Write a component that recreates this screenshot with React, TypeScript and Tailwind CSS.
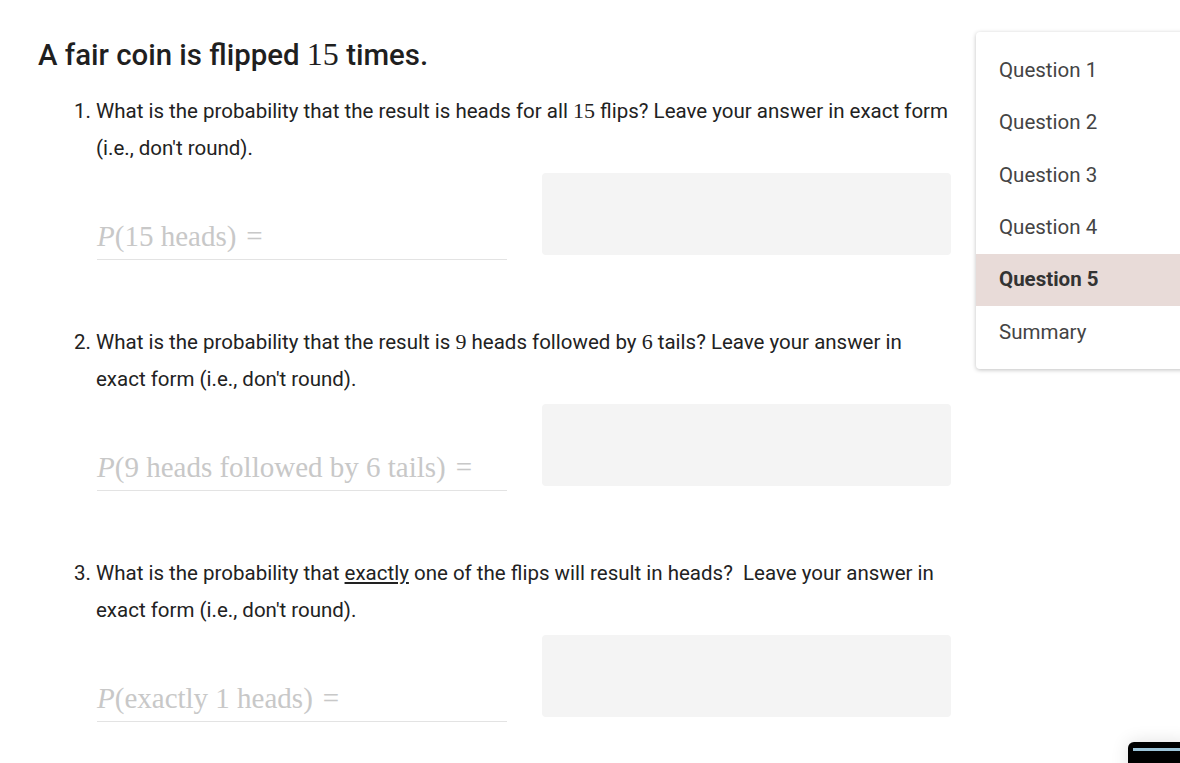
import React from "react";

// Serif math bits (KaTeX-like)
const M = ({ children }: { children: React.ReactNode }) => (
  <span className="font-['Liberation_Serif',serif] text-[22px] leading-none">{children}</span>
);

interface Question {
  num: number;
  text: React.ReactNode;
  label: React.ReactNode;
}

const questions: Question[] = [
  {
    num: 1,
    text: (
      <>
        What is the probability that the result is heads for all <M>15</M> flips? Leave your answer in exact form
        (i.e., don't round).
      </>
    ),
    label: "15 heads",
  },
  {
    num: 2,
    text: (
      <>
        What is the probability that the result is <M>9</M> heads followed by <M>6</M> tails? Leave your answer in
        exact form (i.e., don't round).
      </>
    ),
    label: "9 heads followed by 6 tails",
  },
  {
    num: 3,
    text: (
      <>
        What is the probability that <span className="underline underline-offset-2">exactly</span> one of the flips
        will result in heads?&nbsp; Leave your answer in exact form (i.e., don't round).
      </>
    ),
    label: "exactly 1 heads",
  },
];

const navItems = ["Question 1", "Question 2", "Question 3", "Question 4", "Question 5", "Summary"];

function QuestionBlock({ q }: { q: Question }) {
  return (
    <li className="mb-[64px] pl-[36px]">
      <div className="flex text-[20.5px] leading-[37px] text-[#222]">
        <span className="w-[22px] shrink-0">{q.num}.</span>
        <p className="w-[854px]">{q.text}</p>
      </div>
      <div className="mt-[6px] flex items-start gap-[35px] pl-[23px]">
        <div className="flex h-[87px] w-[410px] items-end border-b border-[#e3e3e3] pb-[8px] font-['Liberation_Serif',serif] text-[29px] leading-none text-[#c8c8c8]">
          <span>
            <i>P</i>({q.label})<span className="ml-[10px]">=</span>
          </span>
        </div>
        <div className="h-[82px] w-[409px] rounded-[4px] bg-[#f4f4f4]" />
      </div>
    </li>
  );
}

export default function App() {
  return (
    <div className="relative flex h-[763px] w-[1180px] overflow-hidden bg-white font-['Roboto',sans-serif]">
      <main className="w-[976px] shrink-0 pl-[38px] pt-[36px]">
        <h1 className="text-[29.4px] font-medium leading-[36px] text-[#1f1f1f]">
          A fair coin is flipped <span className="font-['Liberation_Serif',serif] text-[32px] font-normal">15</span>{" "}
          times.
        </h1>
        <ol className="mt-[20px]">
          {questions.map((q) => (
            <QuestionBlock key={q.num} q={q} />
          ))}
        </ol>
      </main>

      <aside className="mt-[32px] h-[337px] w-[230px] shrink-0 rounded-[4px] bg-white pb-[10px] pt-[12px] shadow-[0_1px_4px_rgba(0,0,0,0.25)]">
        {navItems.map((item) => (
          <div
            key={item}
            className={
              item === "Question 5"
                ? "flex h-[52.4px] items-center bg-[#e8dbd8] pl-[23px] text-[20.5px] font-bold text-[#333]"
                : "flex h-[52.4px] items-center pl-[23px] text-[20.5px] text-[#444]"
            }
          >
            {item}
          </div>
        ))}
      </aside>

      {/* little dark widget in the corner */}
      <div className="absolute left-[1128px] top-[742px] h-[30px] w-[60px] rounded-tl-[6px] bg-black shadow-[0_0_18px_rgba(0,0,0,0.12)]">
        <div className="ml-[5px] mt-[6px] h-[3px] w-full bg-[#9cc4d8]" />
      </div>
    </div>
  );
}
